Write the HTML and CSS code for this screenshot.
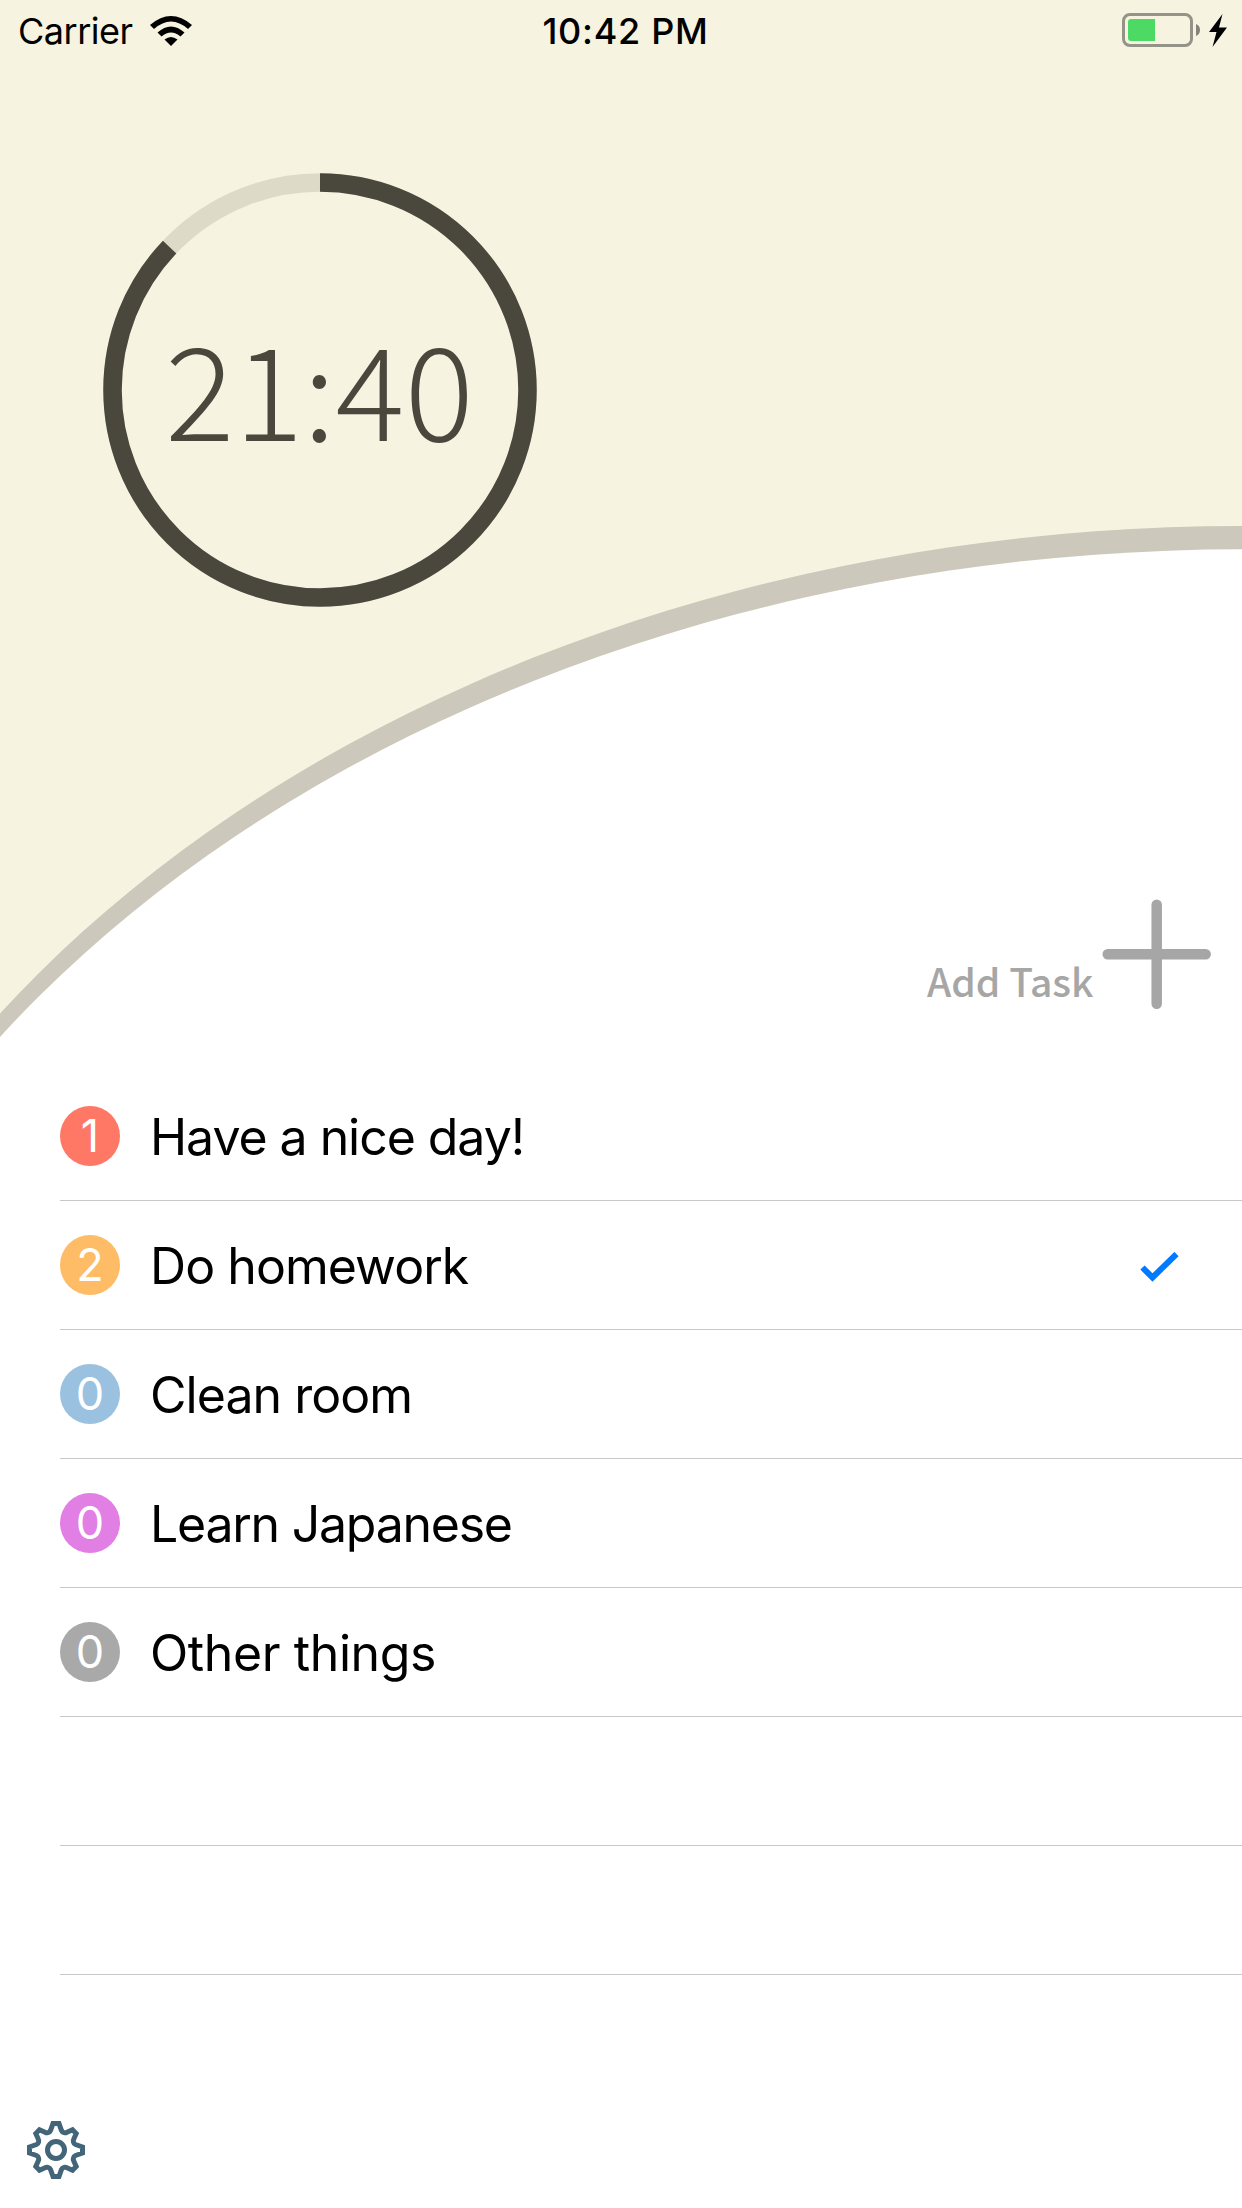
FILE: index.html
```html
<!DOCTYPE html>
<html lang="en">
<head>
<meta charset="utf-8">
<title>Task Timer</title>
<link rel="stylesheet" href="styles.css">
</head>
<body>
<div class="app">
  <section class="hero">
    <svg class="hill" viewBox="0 0 1242 1072" aria-hidden="true">
      <ellipse class="hill-edge" cx="1242" cy="1634" rx="1499" ry="1108"/>
      <ellipse class="hill-face" cx="1242" cy="1657.3" rx="1499" ry="1108"/>
    </svg>
    <header class="status">
      <div class="status-left">
        <span class="carrier">Carrier</span>
        <svg class="wifi" viewBox="0 0 42 31" aria-hidden="true">
          <path d="M0 9Q21-9 42 9L38 13Q21-2 4 13Z"/>
          <path d="M7.500 16.500Q21 4.500 34.500 16.500L30.500 20.500Q21 12.500 11.500 20.500Z"/>
          <path d="M14.500 23.500Q21 18.500 27.500 23.500L21 30Z"/>
        </svg>
      </div>
      <span class="clock">10:42 PM</span>
      <div class="status-right">
        <svg class="battery" viewBox="0 0 106 36" aria-hidden="true">
          <rect class="battery-case" x="1.500" y="1.500" width="68" height="31" rx="6.500"/>
          <path class="battery-charge" d="M9 6H33V28H9Q6 28 6 25V9Q6 6 9 6Z"/>
          <path class="battery-tip" d="M74 11Q78 12.500 78 17T74 23Z"/>
          <path d="M100.500 1L87 19H94.500L90.500 34L105 14.500H97Z"/>
        </svg>
      </div>
    </header>
    <div class="timer">
      <svg class="ring" viewBox="0 0 434 434" aria-hidden="true">
        <circle class="ring-track" cx="217" cy="217" r="207.500"/>
        <circle class="ring-progress" cx="217" cy="217" r="207.500" pathLength="1000" stroke-dasharray="871 1000" transform="rotate(-90 217 217)"/>
      </svg>
      <span class="time">21:40</span>
    </div>
    <div class="add">
      <span class="add-label">Add Task</span>
      <svg class="plus" viewBox="0 0 110 110" aria-hidden="true"><path d="M54.700 5.700V104.700M5.700 55.200H103.700"/></svg>
    </div>
  </section>
  <ul class="tasks">
    <li class="task"><span class="count red">1</span><span class="name tight">Have a nice day!</span></li>
    <li class="task"><span class="count orange">2</span><span class="name">Do homework</span>
      <svg class="check" viewBox="0 0 40 32" aria-hidden="true"><path d="M2.500 15.500L12.500 25.500L36.500 2"/></svg></li>
    <li class="task"><span class="count blue">0</span><span class="name">Clean room</span></li>
    <li class="task"><span class="count violet">0</span><span class="name tighter">Learn Japanese</span></li>
    <li class="task"><span class="count gray">0</span><span class="name looser">Other things</span></li>
    <li class="task"></li>
    <li class="task"></li>
  </ul>
  <footer class="footer">
    <svg class="gear" viewBox="0 0 60 60" aria-hidden="true">
      <path d="M27 3.500H33L35.500 10.500Q36.200 12.200 38 12.600Q39.500 13 41 12.200L46.500 9.800L50.200 13.500L47.800 19Q47 20.500 47.400 22Q47.800 23.800 49.500 24.500L56.500 27V33L49.500 35.500Q47.800 36.200 47.400 38Q47 39.500 47.800 41L50.200 46.500L46.500 50.200L41 47.800Q39.500 47 38 47.400Q36.200 47.800 35.500 49.500L33 56.500H27L24.500 49.500Q23.800 47.800 22 47.400Q20.500 47 19 47.800L13.500 50.200L9.800 46.500L12.200 41Q13 39.500 12.600 38Q12.200 36.200 10.500 35.500L3.500 33V27L10.500 24.500Q12.200 23.800 12.600 22Q13 20.500 12.200 19L9.800 13.500L13.500 9.800L19 12.200Q20.500 13 22 12.600Q23.800 12.200 24.500 10.500Z"/>
      <circle cx="30" cy="30" r="8.500"/>
    </svg>
  </footer>
</div>
</body>
</html>
```
FILE: styles.css
```css
* { box-sizing: border-box; }
body { margin: 0; background: #fff; color: #000; font-family: Inter, "Liberation Sans", sans-serif; }
.app { width: 1242px; height: 2208px; display: flex; flex-direction: column; overflow: hidden; }
.hero { position: relative; height: 1072px; background: #f7f3e1; isolation: isolate; }
.hill { position: absolute; inset: 0; width: 1242px; height: 1072px; z-index: -1; }
.hill-edge { fill: #ccc8bb; }
.hill-face { fill: #fff; }
.status { display: grid; grid-template-columns: 1fr auto 1fr; align-items: center; height: 62px; padding: 0 14px 0 18px; font-size: 36px; line-height: 44px; }
.status-left { display: flex; align-items: center; gap: 17px; }
.carrier { letter-spacing: -.5px; }
.wifi { width: 42px; height: 31px; }
.clock { font-weight: 500; letter-spacing: .7px; padding: 0 0 0 5px; }
.status-right { display: flex; justify-content: flex-end; }
.battery { width: 106px; height: 36px; }
.battery-case { fill: none; stroke: #949387; stroke-width: 3; }
.battery-charge { fill: #4cd964; }
.battery-tip { fill: #858479; }
.timer { width: 434px; height: 434px; margin: 111px 0 0 102.500px; display: grid; place-items: center; }
.timer > * { grid-area: 1 / 1; }
.ring { width: 434px; height: 434px; fill: none; stroke-width: 18.500px; }
.ring-track { stroke: #dedac8; }
.ring-progress { stroke: #4a473d; }
.time { font: 300 129px/150px "Noto Sans CJK JP", sans-serif; color: #4a473d; margin-bottom: 10px; }
.add { display: flex; justify-content: flex-end; align-items: flex-end; margin-top: 292px; padding-right: 30px; color: #a6a6a6; }
.add-label { font: 500 39px/50px "Noto Sans CJK JP", sans-serif; margin: 0 8.500px 4px 0; }
.plus { width: 110px; height: 110px; fill: none; stroke: #a6a6a6; stroke-width: 10.500px; stroke-linecap: round; }
.tasks { list-style: none; margin: 0; padding: 0 0 0 60px; }
.task { display: flex; align-items: center; height: 129px; border-bottom: 1px solid #c8c7cc; padding-right: 62.500px; }
.count { width: 60px; height: 60px; border-radius: 50%; color: #fff; text-align: center; font-size: 45px; line-height: 60px; }
.red { background: #ff7866; }
.orange { background: #ffbc66; }
.blue { background: #9bc1e0; }
.violet { background: #e27fe4; }
.gray { background: #a9a9a9; }
.name { margin-left: 30px; flex: 1; font-size: 50px; line-height: 64px; letter-spacing: -.95px; white-space: nowrap; padding-top: 2px; }
.tight { letter-spacing: -1.050px; }
.tighter { letter-spacing: -1.250px; }
.looser { letter-spacing: -.4px; }
.check { width: 40px; height: 32px; margin-top: 5px; fill: none; stroke: #007aff; stroke-width: 6px; }
.footer { padding: 145px 0 0 26px; }
.gear { width: 60px; height: 60px; display: block; fill: none; stroke: #426579; stroke-width: 5px; }
```
